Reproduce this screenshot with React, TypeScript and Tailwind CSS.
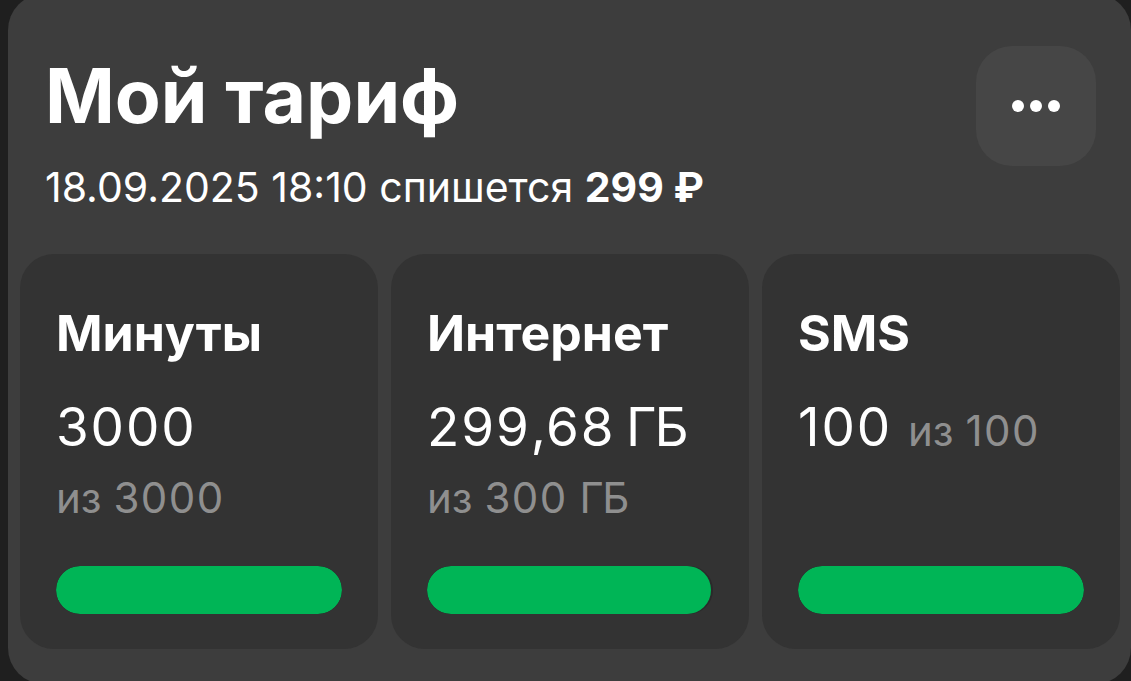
type Stat = {
  title: string;
  value: string;
  total: string;
  inline?: boolean;
  pct: number;
};

const STATS: Stat[] = [
  { title: "Минуты", value: "3000", total: "из 3000", pct: 100 },
  { title: "Интернет", value: "299,68 ГБ", total: "из 300 ГБ", pct: 99.3 },
  { title: "SMS", value: "100", total: "из 100", inline: true, pct: 100 },
];

// digits in the reference font run a bit wider than Inter's, units narrower
function Num({ text }: { text: string }) {
  return (
    <>
      {text.split(/(\d+|ГБ)/).map((part, i) => {
        if (/\d/.test(part))
          return (
            <span key={i} className="tracking-[0.035em]">
              {part}
            </span>
          );
        if (part === "ГБ")
          return (
            <span key={i} className="tracking-[-0.04em]">
              {part}
            </span>
          );
        return <span key={i}>{part}</span>;
      })}
    </>
  );
}

function StatCard({ s }: { s: Stat }) {
  return (
    <div className="flex h-[395px] flex-1 flex-col rounded-[34px] bg-[#333333] px-[36px] pt-[54px] pb-[35px]">
      <div className="text-[50px] leading-[50px] font-bold text-white">{s.title}</div>
      {s.inline ? (
        <div className="mt-[43px] flex items-baseline gap-[16px]">
          <span className="text-[53px] leading-[52px] text-white">
            <Num text={s.value} />
          </span>
          <span className="text-[42px] leading-[41px] text-[#8f8f8f]">
            <Num text={s.total} />
          </span>
        </div>
      ) : (
        <>
          <div className="mt-[43px] text-[53px] leading-[52px] text-white [word-spacing:-0.08em]">
            <Num text={s.value} />
          </div>
          <div className="mt-[24px] text-[42px] leading-[41px] text-[#8f8f8f]">
            <Num text={s.total} />
          </div>
        </>
      )}
      <div className="mt-auto h-[48px] w-full overflow-hidden rounded-full bg-[#2a2a2a]">
        <div
          className="h-full rounded-full bg-[#00b556]"
          style={{ width: `${s.pct}%` }}
        />
      </div>
    </div>
  );
}

export default function App() {
  return (
    <div
      className="h-[681px] w-[1131px] overflow-hidden bg-[#1f1f1f] pl-[8px]"
      style={{ fontFamily: "Inter, 'Noto Sans', sans-serif" }}
    >
      <div className="-mt-[6px] h-[690px] w-[1123px] rounded-[36px] bg-[#3d3d3d] pt-[52px] pr-[11px] pl-[12px]">
        <div className="flex items-start justify-between pr-[24px] pl-[25px]">
          <div className="pt-[12px]">
            <h1 className="text-[75px] leading-[76px] font-bold text-white">Мой тариф</h1>
            <p className="mt-[33px] text-[41px] leading-[40px] text-white">
              18.09.2025 18:10 спишется <span className="font-bold">299 ₽</span>
            </p>
          </div>
          <button className="flex h-[120px] w-[120px] items-center justify-center gap-[6px] rounded-[36px] bg-[#464646]">
            <span className="h-[12px] w-[12px] rounded-full bg-white" />
            <span className="h-[12px] w-[12px] rounded-full bg-white" />
            <span className="h-[12px] w-[12px] rounded-full bg-white" />
          </button>
        </div>
        <div className="mt-[47px] flex gap-[13px]">
          {STATS.map((s) => (
            <StatCard key={s.title} s={s} />
          ))}
        </div>
      </div>
    </div>
  );
}
